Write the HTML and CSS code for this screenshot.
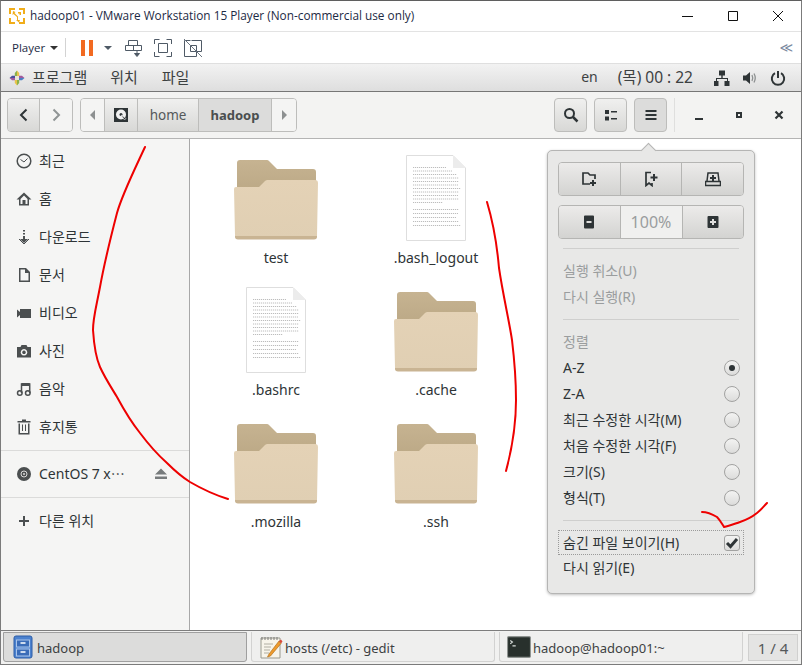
FILE: index.html
```html
<!DOCTYPE html>
<html lang="ko">
<head>
<meta charset="utf-8">
<title>hadoop01</title>
<link rel="stylesheet" href="styles.css">
</head>
<body>
<svg class="defs" width="0" height="0">
  <defs>
    <linearGradient id="fb" x1="0" y1="0" x2="0" y2="1"><stop offset="0" stop-color="#c6b391"/><stop offset="1" stop-color="#b5a27f"/></linearGradient>
    <linearGradient id="ff" x1="0" y1="0" x2="0" y2="1"><stop offset="0" stop-color="#e4d2b6"/><stop offset="1" stop-color="#e0cfb3"/></linearGradient>
    <symbol id="folder" viewBox="0 0 84 82">
      <path d="M3 5a3 3 0 0 1 3-3h27a3 3 0 0 1 2 1l8 8h36a3 3 0 0 1 3 3v40H3z" fill="url(#fb)"/>
      <path d="M0 31a2 2 0 0 1 2-2h23l6-6a4 4 0 0 1 3-1h47a3 3 0 0 1 3 3l-1 53a3 3 0 0 1-3 3H4a3 3 0 0 1-3-3z" fill="url(#ff)"/>
      <path d="M1 78h82v0.500a3 3 0 0 1-3 3H4a3 3 0 0 1-3-3z" fill="#c9b493"/>
    </symbol>
    <symbol id="doc" viewBox="0 0 60 86">
      <path d="M0.500 0.500H47L59.500 13V85.500H0.500z" fill="#fff" stroke="#dedede"/>
      <path d="M47 0.500V13H59.500z" fill="#ececec"/>
      <path d="M7 12.500H40M7 16H46M7 19.500H51M7 23H53M7 26.500H53M7 30H52M7 33.500H55M7 37H53M7 40.500H52M7 44H53M7 47.500H37M7 54.500H53M7 58.500H52M7 62.500H50M7 66.500H53M7 70.500H55" stroke="#a0a0a0" stroke-width="0.700" stroke-dasharray="1.200 0.800" fill="none"/>
    </symbol>
  </defs>
</svg>

<div class="app">
  <div class="titlebar">
    <svg class="ic16 vmlogo" viewBox="0 0 16 16"><path d="M0 0h6v2H2v4H0zM10 0h6v6h-2V2h-4zM16 10v6h-6v-2h4v-4zM6 16H0v-6h2v4h4z" fill="#f0ad1a"/><path d="M4 3l2.500 1L5.500 5 9 8.500V12l2 0-1 2.500L7 12h1V9L4.500 6 3.500 7z" fill="#f0ad1a"/><path d="M9 4h3v3h-1.500V5.500H9z" fill="#f0ad1a"/></svg>
    <span class="title-text">hadoop01 - VMware Workstation 15 Player (Non-commercial use only)</span>
    <div class="win-btns">
      <svg class="ic16" viewBox="0 0 16 16"><path d="M2 8.500h11" stroke="#111" fill="none"/></svg>
      <svg class="ic16" viewBox="0 0 16 16"><path d="M3.500 3.500h9v9h-9z" stroke="#111" fill="none"/></svg>
      <svg class="ic16" viewBox="0 0 16 16"><path d="M3 3l10 10M13 3L3 13" stroke="#111" fill="none"/></svg>
    </div>
  </div>

  <div class="vmbar">
    <span class="player">Player</span><span class="caret"></span>
    <span class="vsep"></span>
    <span class="pause"><i></i><i></i></span>
    <span class="caret caret-blue"></span>
    <svg class="vmicon" viewBox="0 0 18 18"><path d="M3.500 1.500h9v5h-9zM.5 6.500h16v5H.5zM8.500 6.500v5" fill="none" stroke="#4f5a66"/><path d="M12 12v3M9.500 14.500l2.500 3 2.500-3z" fill="#4f5a66" stroke="#4f5a66"/></svg>
    <svg class="vmicon" viewBox="0 0 18 18"><path d="M.5 5V.5h5M12.500.5h5V5M17.500 13v4.500h-5M5.500 17.500H.5V13" fill="none" stroke="#4f5a66"/><path d="M4.500 4.500h9v9h-9z" fill="none" stroke="#4f5a66"/></svg>
    <svg class="vmicon" viewBox="0 0 18 18"><path d="M6.500 1.500H.5v16h12v-5M7.500 1.500h10v11h-5M6.500 6.500h6v6h-6z" fill="none" stroke="#4f5a66"/><path d="M0 0l18 18" stroke="#6b7580" fill="none"/></svg>
    <span class="chev">≪</span>
  </div>

  <div class="panel">
    <svg class="ic16" viewBox="0 0 16 16"><path d="M8 0.500l2.200 2.500v3H8z" fill="#e8c24a"/><path d="M8 0.500L5.800 3v3H8z" fill="#8bb24a"/><path d="M15.500 8L13 5.800h-3V8z" fill="#a05a9c"/><path d="M15.500 8L13 10.200h-3V8z" fill="#4a7fc4"/><path d="M8 15.500l2.200-2.500v-3H8z" fill="#8bb24a"/><path d="M8 15.500L5.800 13v-3H8z" fill="#e8c24a"/><path d="M0.500 8L3 10.200h3V8z" fill="#a05a9c"/><path d="M0.500 8L3 5.800h3V8z" fill="#4a4f9c"/><path d="M6 6h4v4H6z" fill="#e9e3d8"/></svg>
    <span class="pmenu first">프로그램</span><span class="pmenu second">위치</span><span class="pmenu">파일</span>
    <div class="panel-right">
      <span class="en">en</span>
      <span class="clock">(목) 00 : 22</span>
      <svg class="ic16" viewBox="0 0 16 16"><path d="M5 0.500h6v5H8.700v2.500H14v3h1.500v5h-5v-5H13V9H3v2h1.500v5h-5v-5H2V8h5.300V5.500H5z" fill="#2e3436"/></svg>
      <svg class="ic16" viewBox="0 0 16 16"><path d="M1 5.500h3L8 2v12L4 10.500H1z" fill="#2e3436"/><path d="M10 5q1.500 3 0 6M12 3.500q2.500 4.500 0 9" fill="none" stroke="#8d9091" stroke-width="1.300"/></svg>
      <svg class="ic16" viewBox="0 0 16 16"><path d="M5 3.200a6.200 6.200 0 1 0 6 0" fill="none" stroke="#2e3436" stroke-width="2"/><path d="M8 1v7" stroke="#2e3436" stroke-width="2" fill="none"/></svg>
    </div>
  </div>

  <div class="header">
    <div class="group">
      <button class="btn seg wide"><svg class="ic16" viewBox="0 0 16 16"><path d="M10.500 2.500L5 8l5.500 5.500" fill="none" stroke="#2e3436" stroke-width="2"/></svg></button>
      <button class="btn seg wide flat"><svg class="ic16" viewBox="0 0 16 16"><path d="M5.500 2.500L11 8l-5.500 5.500" fill="none" stroke="#8f9494" stroke-width="2"/></svg></button>
    </div>
    <div class="group pathbar">
      <button class="btn seg arrow flat"><span class="tri-l"></span></button>
      <button class="btn seg pathicon"><svg class="ic16" viewBox="0 0 16 16"><path d="M1 1h14v14H1z" fill="#2e3436"/><circle cx="8" cy="7.500" r="5" fill="#f1f1f1"/><circle cx="8" cy="7.500" r="1.500" fill="#2e3436"/><path d="M8 8l3.500 5 1.500-1.500z" fill="#2e3436" stroke="#f1f1f1" stroke-width="0.600"/></svg></button>
      <button class="btn seg path-home">home</button>
      <button class="btn seg path-cur">hadoop</button>
      <button class="btn seg arrow flat"><span class="tri-r"></span></button>
    </div>
    <div class="header-right">
      <button class="btn tool"><svg class="ic16" viewBox="0 0 16 16"><circle cx="6.500" cy="6.500" r="4.500" fill="none" stroke="#2e3436" stroke-width="2"/><path d="M10 10l4.500 4.500" stroke="#2e3436" stroke-width="2.500" fill="none"/></svg></button>
      <button class="btn tool"><svg class="ic16" viewBox="0 0 16 16"><path d="M2 3h4v4H2zM2 9.500h4v4H2zM8 4h6v1.500H8zM8 11h6v1.500H8z" fill="#2e3436"/></svg></button>
      <button class="btn tool active"><svg class="ic16" viewBox="0 0 16 16"><path d="M2.500 3h11v2h-11zM2.500 7h11v2h-11zM2.500 11h11v2h-11z" fill="#2e3436"/></svg></button>
      <span class="hsep"></span>
      <svg class="ctl ic16" viewBox="0 0 16 16"><path d="M4 11h8v2H4z" fill="#2e3436"/></svg>
      <svg class="ctl ic16" viewBox="0 0 16 16"><path d="M5 5h6v6H5zM7 7v2h2V7z" fill="#2e3436" fill-rule="evenodd"/></svg>
      <svg class="ctl ic16" viewBox="0 0 16 16"><path d="M4.500 4.500l7 7M11.500 4.500l-7 7" stroke="#2e3436" stroke-width="2.200" fill="none"/></svg>
    </div>
  </div>

  <div class="main">
    <aside class="sidebar">
      <div class="side-row"><svg class="ic16" viewBox="0 0 16 16"><circle cx="8" cy="8" r="6.800" fill="none" stroke="#4b4f50" stroke-width="1.500"/><path d="M4.500 6.500L8 9l3.500-3.500" fill="none" stroke="#4b4f50"/></svg><span>최근</span></div>
      <div class="side-row"><svg class="ic16" viewBox="0 0 16 16"><path d="M8 1.500L0.500 8.500H3v6h10v-6h2.500zM8 4.500l3.500 3.500v5h-2V9h-3v4h-2V8z" fill="#4b4f50" fill-rule="evenodd"/></svg><span>홈</span></div>
      <div class="side-row"><svg class="ic16" viewBox="0 0 16 16"><path d="M7 1h2v1.500H7zM7 4h2v1.500H7zM7 7h2v3h3l-4 4-4-4h3z" fill="#4b4f50"/><path d="M3 10l5 5 5-5" fill="none" stroke="#4b4f50"/></svg><span>다운로드</span></div>
      <div class="side-row"><svg class="ic16" viewBox="0 0 16 16"><path d="M3 1h7l4 4v10H3zM4.500 2.500v11h8V6H9V2.500z" fill="#4b4f50" fill-rule="evenodd"/></svg><span>문서</span></div>
      <div class="side-row"><svg class="ic16" viewBox="0 0 16 16"><path d="M1 4.500l3 2.500V4h11v9H4v-3l-3 2.500z" fill="#4b4f50"/></svg><span>비디오</span></div>
      <div class="side-row"><svg class="ic16" viewBox="0 0 16 16"><path d="M1 4h3.500l1-2h5l1 2H15v10.500H1zM8 6a3.300 3.300 0 1 0 .01 0zM8 7.500a1.800 1.800 0 1 1-.01 0z" fill="#4b4f50" fill-rule="evenodd"/></svg><span>사진</span></div>
      <div class="side-row"><svg class="ic16" viewBox="0 0 16 16"><circle cx="3.800" cy="12" r="2.300" fill="none" stroke="#4b4f50" stroke-width="1.500"/><circle cx="11.800" cy="12" r="2.300" fill="none" stroke="#4b4f50" stroke-width="1.500"/><path d="M5.500 12V3h8.200v9" fill="none" stroke="#4b4f50" stroke-width="1.500"/><path d="M5.500 2h8.200v3H5.500z" fill="#4b4f50"/></svg><span>음악</span></div>
      <div class="side-row"><svg class="ic16" viewBox="0 0 16 16"><path d="M6 0.500h4V2h4.500v1.500h-13V2H6zM2.500 4.500H4V14h8V4.500h1.500v11h-11zM6 5.500h1V12H6zM9 5.500h1V12H9z" fill="#4b4f50"/></svg><span>휴지통</span></div>
      <div class="side-sep"></div>
      <div class="side-row short"><svg class="ic16" viewBox="0 0 16 16"><circle cx="8" cy="8" r="7" fill="#4b4f50"/><circle cx="8" cy="8" r="3" fill="none" stroke="#d8d8d8"/><circle cx="8" cy="8" r="1" fill="#d8d8d8"/></svg><span class="grow">CentOS 7 x⋯</span><svg class="ic16 eject" viewBox="0 0 16 16"><path d="M8 2.500l6 6H2zM2 10.500h12v2.500H2z" fill="#777b7c"/></svg></div>
      <div class="side-sep"></div>
      <div class="side-row"><svg class="ic16" viewBox="0 0 16 16"><path d="M7 3h2v4h4v2H9v4H7V9H3V7h4z" fill="#4b4f50"/></svg><span>다른 위치</span></div>
    </aside>

    <section class="files">
      <div class="file"><svg class="thumb-folder"><use href="#folder"/></svg><span>test</span></div>
      <div class="file"><svg class="thumb-doc"><use href="#doc"/></svg><span>.bash_logout</span></div>
      <div class="file"><svg class="thumb-doc"><use href="#doc"/></svg><span>.bashrc</span></div>
      <div class="file"><svg class="thumb-folder"><use href="#folder"/></svg><span>.cache</span></div>
      <div class="file"><svg class="thumb-folder"><use href="#folder"/></svg><span>.mozilla</span></div>
      <div class="file"><svg class="thumb-folder"><use href="#folder"/></svg><span>.ssh</span></div>
    </section>
  </div>

  <footer class="taskbar">
    <div class="task active">
      <svg class="tico" viewBox="0 0 20 24"><rect x="1" y="1" width="18" height="22" rx="2" fill="#4c82cf" stroke="#2c5da6"/><rect x="3.500" y="5" width="13" height="7" fill="#3a6cb8" stroke="#a9c4ea"/><rect x="3.500" y="14" width="13" height="7" fill="#3a6cb8" stroke="#a9c4ea"/><path d="M7.500 8h5M7.500 17h5" stroke="#fff" stroke-width="1.500"/></svg>
      <span>hadoop</span>
    </div>
    <div class="task">
      <svg class="tico" viewBox="0 0 24 24"><path d="M2 3h19v20H2z" fill="#f7f4ea" stroke="#9a9a8e"/><path d="M3 2v3M6 2v3M9 2v3M12 2v3M15 2v3M18 2v3" stroke="#7a7a7a"/><path d="M5 9h9M5 12h7M5 15h6M5 18h5" stroke="#b0aea2"/><path d="M10 19l-1.500 3 3-1L22 8.500 20 6z" fill="#ee9b2d" stroke="#a86410" stroke-width="0.600"/><path d="M20 6l2 2.500 1.500-2L22 4.500z" fill="#d84a3a"/></svg>
      <span>hosts (/etc) - gedit</span>
    </div>
    <div class="task">
      <svg class="tico" viewBox="0 0 22 22"><rect x="0.500" y="1.500" width="21" height="19" rx="1" fill="#28302c" stroke="#8f9491"/><path d="M3 5l2 1.500L3 8M5 10h3" stroke="#d9dedb" fill="none"/></svg>
      <span>hadoop@hadoop01:~</span>
    </div>
    <div class="pager">1 / 4</div>
  </footer>

  <div class="popover">
    <span class="pop-arrow"></span>
    <div class="pop-group">
      <button class="pbtn"><svg class="ic16" viewBox="0 0 16 16"><path d="M9 13H2V2h5l2 2h5v4" fill="none" stroke="#2e3436" stroke-width="1.700"/><path d="M11 9h2v2h2v2h-2v2h-2v-2H9v-2h2z" fill="#2e3436"/></svg></button>
      <button class="pbtn"><svg class="ic16" viewBox="0 0 16 16"><path d="M8 1.500H3v13l3-2.500 3 2.500V12" fill="none" stroke="#2e3436" stroke-width="1.700"/><path d="M10 3h2v2.500h2.500v2H12V10h-2V7.500H7.500v-2H10z" fill="#2e3436"/></svg></button>
      <button class="pbtn"><svg class="ic16" viewBox="0 0 16 16"><path d="M2 10l1-8h10l1 8" fill="none" stroke="#2e3436" stroke-width="1.500"/><path d="M0.500 10.500h15v4H0.500z" fill="none" stroke="#2e3436" stroke-width="1.500"/><path d="M7 4h2v2h2v2H9v2H7V8H5V6h2z" fill="#2e3436"/></svg></button>
    </div>
    <div class="pop-group zoomrow">
      <button class="pbtn"><svg class="ic16" viewBox="0 0 16 16"><path d="M3 2.500a1 1 0 0 1 1-1h8a1 1 0 0 1 1 1v11a1 1 0 0 1-1 1H4a1 1 0 0 1-1-1zM5.500 7v2h5V7z" fill="#2e3436" fill-rule="evenodd"/></svg></button>
      <span class="zoomval">100%</span>
      <button class="pbtn"><svg class="ic16" viewBox="0 0 16 16"><path d="M2.500 3a1 1 0 0 1 1-1h9a1 1 0 0 1 1 1v10a1 1 0 0 1-1 1h-9a1 1 0 0 1-1-1zM7 5v2H5v2h2v2h2V9h2V7H9V5z" fill="#2e3436" fill-rule="evenodd"/></svg></button>
    </div>
    <div class="pop-sep"></div>
    <div class="pop-item off"><span>실행 취소(U)</span></div>
    <div class="pop-item off"><span>다시 실행(R)</span></div>
    <div class="pop-sep"></div>
    <div class="pop-item off"><span>정렬</span></div>
    <div class="pop-item"><span>A-Z</span><i class="radio on"></i></div>
    <div class="pop-item"><span>Z-A</span><i class="radio"></i></div>
    <div class="pop-item"><span>최근 수정한 시각(M)</span><i class="radio"></i></div>
    <div class="pop-item"><span>처음 수정한 시각(F)</span><i class="radio"></i></div>
    <div class="pop-item"><span>크기(S)</span><i class="radio"></i></div>
    <div class="pop-item"><span>형식(T)</span><i class="radio"></i></div>
    <div class="pop-sep"></div>
    <div class="pop-item focus"><span>숨긴 파일 보이기(H)</span><i class="check"><svg viewBox="0 0 14 14" width="14" height="14"><path d="M2 7L5.500 10.500L12 3" fill="none" stroke="#2e3436" stroke-width="3"/></svg></i></div>
    <div class="pop-item"><span>다시 읽기(E)</span></div>
  </div>

  <svg class="ink" viewBox="0 0 802 665" width="802" height="665">
    <path d="M145 147C132 175 122 195 117 213C110 240 104 265 100 287C96 308 93 318 93 330C94 345 96 358 100 367C105 378 111 387 117 397C124 410 132 423 140 433C149 445 158 455 167 463C175 471 182 477 190 482C202 489 215 495 228 499"/>
    <path d="M487 202C493 222 497 245 499 268C503 295 509 320 512 340C515 365 516 385 516 400C516 425 513 445 506 471"/>
    <path d="M702 512C708 512 712 514 717 517C720 520 722 524 724 527C729 526 734 524 740 522C746 520 752 517 757 513C761 510 764 506 767 503"/>
  </svg>
</div>
</body>
</html>
```
FILE: styles.css
```css
* { box-sizing: border-box; }
html, body { margin: 0; padding: 0; }
body { width: 802px; height: 665px; overflow: hidden; font-family: "Noto Sans", "Noto Sans CJK KR", sans-serif; color: #2e3436; background: #fff; }
.defs { position: absolute; }
.app { position: relative; width: 802px; height: 665px; display: flex; flex-direction: column; overflow: hidden; border-left: 1px solid #7b7b7b; border-right: 1px solid #7b7b7b; border-top: 1px solid #5f5f5f; border-bottom: 1px solid #7b7b7b; }
.ic16 { width: 16px; height: 16px; flex: none; display: block; }
button { font: inherit; color: inherit; margin: 0; padding: 0; }

.titlebar { height: 31px; flex: none; display: flex; align-items: center; padding-left: 8px; background: #fff; border-bottom: 1px solid #e3e3e3; }
.vmlogo { margin-right: 5px; margin-top: -1px; }
.title-text { font-family: "Open Sans", sans-serif; font-size: 11.800px; color: #1c2a44; margin-top: -2px; }
.win-btns { margin-left: auto; display: flex; gap: 29px; padding-right: 15px; }
.win-btns svg { width: 16px; height: 16px; }

.vmbar { height: 32px; flex: none; display: flex; align-items: center; background: #fff; border-bottom: 1px solid #dfdfdf; padding-left: 11px; }
.player { font-family: "Open Sans", sans-serif; font-size: 11.500px; color: #1c2a44; }
.caret { width: 0; height: 0; border-left: 4px solid transparent; border-right: 4px solid transparent; border-top: 4px solid #333; margin-left: 5px; }
.caret-blue { border-top-color: #4f5a66; margin-left: 11px; margin-right: 13px; }
.vsep { width: 1px; height: 19px; background: #d3d3d3; margin-left: 7px; margin-right: 15px; }
.pause { display: flex; gap: 4px; }
.pause i { width: 4px; height: 16px; background: #f26a21; display: block; }
.vmicon { width: 18px; height: 18px; margin-right: 11px; flex: none; }
.vmicon + .vmicon { margin-right: 12px; }
.chev { margin-left: auto; margin-right: 8px; font-size: 13px; color: #7b8aa0; font-family: "DejaVu Sans", sans-serif; }

.panel { height: 28px; flex: none; display: flex; align-items: center; padding-left: 8px; background: linear-gradient(#f2f2f2, #dedede); border-bottom: 1px solid #767676; font-size: 14px; color: #3d4142; }
.pmenu { padding-bottom: 3px; font-size: 15px; font-family: "Noto Sans CJK KR", sans-serif; }
.first { margin-left: 7px; margin-right: 23px; }
.second { margin-right: 24px; }
.panel-right { margin-left: auto; display: flex; align-items: center; padding-right: 15px; }
.en { margin-right: 20px; font-size: 14px; padding-bottom: 3px; }
.clock { margin-right: 21px; font-size: 15.500px; padding-bottom: 3px; }
.panel-right svg { margin-left: 12px; }
.panel-right svg:first-of-type { margin-left: 0; }

.header { height: 47px; flex: none; display: flex; align-items: center; padding: 0 0 0 6px; background: #f3f3f2; border-bottom: 1px solid #b4b4b4; }
.group { display: flex; border: 1px solid #bdbdbb; border-radius: 4px; height: 34px; overflow: hidden; }
.pathbar { margin-left: 7px; }
.btn { display: flex; align-items: center; justify-content: center; border: 0; background: linear-gradient(#f0f0ef, #d8d8d6); font-size: 14px; }
.seg { height: 100%; border-right: 1px solid #bdbdbb; }
.seg:last-child { border-right: 0; }
.wide { width: 32px; }
.flat { background: #f4f4f3; }
.arrow { width: 24px; }
.pathicon { width: 33px; }
.path-home { width: 61px; font-size: 13.500px; color: #55595a; }
.path-cur { width: 73px; background: #dcdcdb; font-size: 13px; font-weight: 700; color: #4a4e4f; }
.tri-l { border-top: 5px solid transparent; border-bottom: 5px solid transparent; border-right: 5px solid #8d9091; }
.tri-r { border-top: 5px solid transparent; border-bottom: 5px solid transparent; border-left: 5px solid #8d9091; }
.header-right { margin-left: auto; display: flex; align-items: center; padding-right: 14px; }
.tool { width: 33px; height: 34px; border: 1px solid #bdbdbb; border-radius: 4px; margin-right: 7px; }
.tool.active { background: #dcdcdb; }
.hsep { width: 1px; height: 34px; background: #dfdfde; margin-right: 16px; }
.ctl { margin-right: 24px; }
.ctl:last-child { margin-right: 0; }

.main { flex: 1; display: flex; min-height: 0; }
.sidebar { width: 189px; flex: none; background: #f5f5f4; border-right: 1px solid #a8a8a8; padding-top: 3px; font-size: 14px; color: #2e3436; }
.side-row { height: 38px; display: flex; align-items: center; padding-left: 15px; gap: 7px; }
.side-row span { padding-bottom: 2px; }
.side-row.short { height: 46px; padding-right: 20px; }
.grow { flex: 1; }
.side-sep { height: 1px; background: #dbdbda; margin-top: 4px; }
.side-row.short + .side-sep { margin-top: 0; margin-bottom: 4px; }
.eject { margin-left: auto; }

.files { flex: 1; display: grid; grid-template-columns: 160px 160px; grid-auto-rows: 132px; padding: 13px 0 0 6px; background: #fff; align-content: start; }
.file { display: flex; flex-direction: column; align-items: center; font-size: 14px; color: #2e3436; }
.thumb-folder { width: 84px; height: 82px; margin-top: 6px; margin-bottom: 8px; }
.thumb-doc { width: 60px; height: 86px; margin-top: 3px; margin-bottom: 7px; }
.file span { line-height: 20px; }

.taskbar { height: 34px; flex: none; display: flex; align-items: stretch; background: #f1f1f0; border-top: 1px solid #7d7d7d; padding: 1px 3px 2px 2px; gap: 4px; font-size: 13px; color: #3d4142; }
.task { width: 244px; display: flex; align-items: center; gap: 2px; padding-left: 7px; background: #efefee; border: 1px solid #d2d2d1; border-top: 0; border-radius: 0 0 3px 3px; }
.task span { padding-top: 2px; }
.task.active { background: #dcdcdb; border: 1px solid #9f9f9f; }
.tico { width: 24px; height: 24px; flex: none; }
.pager { margin-left: 1px; width: 50px; margin-top: 2px; margin-bottom: 1px; display: flex; align-items: center; justify-content: center; background: #e4e4e3; border: 1px solid #d0d0cf; font-size: 15px; color: #55595a; }

.popover { position: absolute; left: 546px; top: 149px; width: 208px; height: 444px; padding: 11px 10px 0; background: #e8e8e7; border: 1px solid #b5b5b4; border-radius: 5px; box-shadow: 0 1px 3px rgba(0,0,0,.25); font-size: 14px; }
.pop-arrow { position: absolute; left: 95px; top: -6px; width: 11px; height: 11px; background: #e8e8e7; border-left: 1px solid #b5b5b4; border-top: 1px solid #b5b5b4; transform: rotate(45deg); }
.pop-group { position: relative; display: flex; height: 34px; border: 1px solid #b5b5b3; border-radius: 4px; overflow: hidden; }
.zoomrow { margin-top: 9px; }
.pbtn { flex: 1; display: flex; align-items: center; justify-content: center; border: 0; border-right: 1px solid #b5b5b3; background: linear-gradient(#ecebea, #d3d3d1); }
.pbtn:last-child { border-right: 0; }
.zoomval { width: 62px; flex: none; display: flex; align-items: center; justify-content: center; background: #f0f0ef; font-size: 16px; color: #9a9d9e; border-right: 1px solid #b5b5b3; }
.pop-sep { height: 1px; background: #cfcfce; margin: 9px 5px; }
.pop-item { height: 26px; display: flex; align-items: center; justify-content: space-between; padding: 0 4px 0 5px; color: #2e3436; }
.pop-item span { padding-bottom: 2px; }
.off { color: #9a9d9e; }
.radio { width: 16px; height: 16px; border-radius: 50%; border: 1px solid #a2a2a1; background: linear-gradient(#f3f3f2, #dcdcdb); display: flex; align-items: center; justify-content: center; }
.radio.on::after { content: ""; width: 6px; height: 6px; border-radius: 50%; background: #2e3436; }
.focus { height: 25px; outline: 1px dotted #9a9a9a; outline-offset: -1px; margin-top: 1px; }
.check { width: 16px; height: 16px; border: 1px solid #a2a2a1; border-radius: 3px; background: linear-gradient(#f3f3f2, #dcdcdb); display: flex; align-items: center; justify-content: center; }

.ink { position: absolute; left: -1px; top: -1px; pointer-events: none; }
.ink path { fill: none; stroke: #ee0000; stroke-width: 2; stroke-linecap: round; }
```
